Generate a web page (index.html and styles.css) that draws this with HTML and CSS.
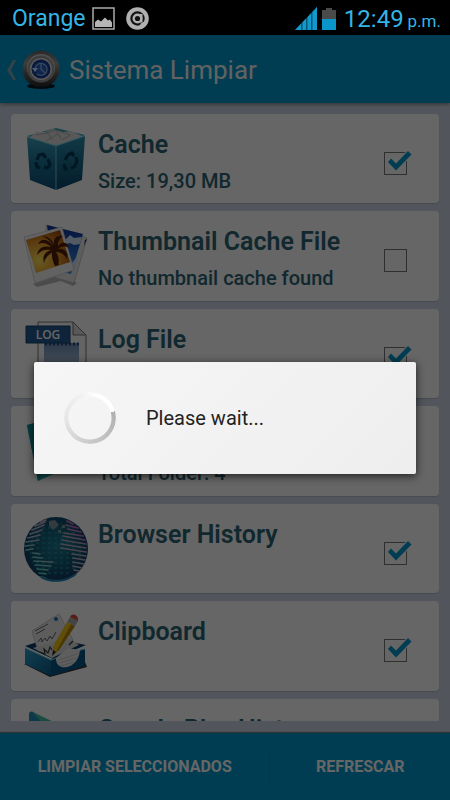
FILE: index.html
```html
<!DOCTYPE html>
<html lang="es">
<head>
<meta charset="utf-8">
<meta name="viewport" content="width=device-width, initial-scale=1">
<title>Sistema Limpiar</title>
<link rel="stylesheet" href="styles.css">
</head>
<body>
<div class="status">
  <span class="carrier">Orange</span>
  <svg class="status-icon" width="23" height="23" viewBox="0 0 23 23" aria-hidden="true"><rect x="1" y="1" width="21" height="21" fill="none" stroke="#aaa" stroke-width="1.5"/><path d="M3 20v-5l3-2.500 3 2 4-4 3 3 2-1 2 3v4.500z" fill="#b5b5b5"/></svg>
  <svg class="status-icon" width="23" height="23" viewBox="0 0 23 23" aria-hidden="true"><circle cx="11.500" cy="11.500" r="11.300" fill="#b0b0b0"/><circle cx="11.500" cy="11.500" r="7.200" fill="#111"/><circle cx="11.500" cy="11.500" r="5" fill="#b0b0b0"/><circle cx="11.500" cy="11.500" r="2.600" fill="#111"/><path d="M14 7h2.500v8.500H14z" fill="#b0b0b0"/><path d="m14 17 5-3 1 3-4 3z" fill="#b0b0b0"/></svg>
  <svg class="signal" width="23" height="23" viewBox="0 0 23 23" aria-hidden="true"><path d="M0 23 22 0v23z" fill="#08557a"/><path d="M0 23 6 16.700V23zM7.500 15.200 11 11.500V23H7.500zM12.500 10 16 6.300V23h-3.500zM17.500 4.700 22 0v23h-4.500z" fill="#1199cc"/></svg>
  <svg width="14" height="22" viewBox="0 0 14 22" aria-hidden="true"><path d="M0 2h4V0h6v2h4v20H0z" fill="#4a4a4a"/><path d="M0 11h14v11H0z" fill="#0a96c8"/></svg>
  <span class="clock">12:49 <small>p.m.</small></span>
</div>
<div class="app">
  <header class="header">
    <a class="back" href="#" aria-label="Atrás"><svg width="10" height="22" viewBox="0 0 10 22"><path d="M7 1h3L5 11l5 10H7L1 11z" fill="#7fa5b5"/></svg></a>
    <svg class="logo" width="38" height="40" viewBox="0 0 38 40" aria-hidden="true">
      <defs>
        <linearGradient id="metal" x1="0" y1="0" x2="0" y2="1"><stop offset="0" stop-color="#666"/><stop offset=".35" stop-color="#999"/><stop offset=".6" stop-color="#666"/><stop offset="1" stop-color="#222"/></linearGradient>
        <radialGradient id="dial"><stop offset="0" stop-color="#2f76e0"/><stop offset="1" stop-color="#12368d"/></radialGradient>
      </defs>
      <ellipse cx="19" cy="36" rx="14" ry="3" fill="#001c28"/>
      <circle cx="19" cy="19" r="18.500" fill="url(#metal)"/>
      <circle cx="19" cy="18" r="14" fill="#ccc"/><circle cx="19" cy="19" r="13.500" fill="#999"/>
      <circle cx="19" cy="19" r="11" fill="#ddd"/><circle cx="19" cy="19" r="9.500" fill="url(#dial)"/>
      <path d="M13 19a6 6 0 1 1 2 4.800M19 14v5l4 4" fill="none" stroke="#8fb0e5" stroke-width="1.300"/><path d="M10 18h6l-3 4z" fill="#cfe0fa"/>
    </svg>
    <h1>Sistema Limpiar</h1>
  </header>
  <main class="list">
    <div class="cards">
      <label class="card">
        <svg class="icon" viewBox="0 0 66 66" aria-hidden="true">
          <defs>
            <linearGradient id="binL" x1="0" y1="0" x2="0" y2="1"><stop offset="0" stop-color="#3da2bd"/><stop offset=".5" stop-color="#1a7096"/><stop offset="1" stop-color="#0e4f78"/></linearGradient>
            <linearGradient id="binR" x1="0" y1="0" x2="0" y2="1"><stop offset="0" stop-color="#2c8fae"/><stop offset="1" stop-color="#0a456b"/></linearGradient>
          </defs>
          <path d="M4 10 33 2l29 7-29 10z" fill="#36a4c2"/>
          <path d="m7 11 6-5 9 0 8-3 10 3 8-1 11 5-13 6-13 3-16-4z" fill="#ddd"/>
          <path d="m13 9 12-2 4 7m-6-7 10-3 5 9m-5-9 14 5-8 5m-16 1 12-7" fill="none" stroke="#aaa" stroke-width=".8"/>
          <path d="M4 11 33 20v44L7 54z" fill="url(#binL)"/><path d="M33 20 62 10l-3 44-26 10z" fill="url(#binR)"/>
          <path d="m4 11 29 9 29-10M33 20v44" fill="none" stroke="#69cbe0" stroke-width="1"/>
          <g fill="none" stroke="#073a5b" stroke-width="3.200" stroke-linejoin="round"><path d="m14 34 2-5 4-1 3 4M25 33l2 6-3 3-3-1M17 42l-3-1-1-5"/><path d="m42 34 3-5 4-2 2 3M53 31l1 5-3 5-3 1M45 43l-3 0-1-5"/></g>
        </svg>
        <span class="text"><strong>Cache</strong><span class="sub">Size: 19,30 MB</span></span>
        <span class="check"><input type="checkbox" checked><svg viewBox="0 0 30 26"><path d="m4 12 3-3.500 5 5L24 1l3.500 3.500L12 20.500z"/></svg></span>
      </label>
      <label class="card">
        <svg class="icon" viewBox="0 0 66 66" aria-hidden="true">
          <defs>
            <radialGradient id="sun" cx=".3" cy=".7" r=".9"><stop offset="0" stop-color="#ffe45c"/><stop offset=".45" stop-color="#e99a2a"/><stop offset="1" stop-color="#903b08"/></radialGradient>
            <linearGradient id="sky" x1="0" y1="0" x2="0" y2="1"><stop offset="0" stop-color="#0d2f96"/><stop offset="1" stop-color="#3795e6"/></linearGradient>
          </defs>
          <path d="m10 61 30-10 14 9-4 3-12-5-24 6z" fill="#bbb"/>
          <path d="m23 2 41 13-13 45-28-8z" fill="#e8e8e8" stroke="#aaa" stroke-width=".6"/>
          <path d="m24 2 36 9-12 40-18-4z" fill="url(#sky)"/>
          <path d="m62 17 2-1-3 7z" fill="#222"/>
          <path d="m42 17 5-5 4 3 8-1-2 7-6 1-4-2-6 2zM47 42l8-9-3 13z" fill="#cde3fa"/>
          <path d="m1 14 38-10 12 43-39 13z" fill="#f4f4f4" stroke="#bbb" stroke-width=".6"/>
          <path d="m3 17 34-10 10 32-34 11z" fill="url(#sun)"/>
          <path d="M30 25c-2 7-1 11 2 18l4-1c-4-7-4-12-3-18z" fill="#421804"/>
          <path d="M30 23c-5-8-12-8-15-2 5-2 9-1 13 3-8-2-13 1-14 8 4-5 8-6 14-5-6 2-9 6-7 13 1-5 5-9 9-11 0 5 1 9 5 13 2-5 0-10-2-13 5 0 9 3 11 7 2-7-3-11-9-10 4-3 7-3 11-1-1-6-7-7-11-2 0-5 2-8 5-10-7-1-10 3-9 9-1-5-6-9-12-9 5 2 9 5 11 10z" fill="#53200a"/>
        </svg>
        <span class="text"><strong>Thumbnail Cache File</strong><span class="sub">No thumbnail cache found</span></span>
        <span class="check"><input type="checkbox"></span>
      </label>
      <label class="card">
        <svg class="icon" viewBox="0 0 66 66" aria-hidden="true">
          <defs><linearGradient id="note" x1="0" y1="0" x2="0" y2="1"><stop offset="0" stop-color="#6f8eb5"/><stop offset="1" stop-color="#dce8f6"/></linearGradient></defs>
          <path d="M15 1h35l13 13v51H15z" fill="#fafafa" stroke="#777"/>
          <path d="M50 1v13h13z" fill="#ddd" stroke="#777"/>
          <path d="M21 22h35v38H21z" fill="url(#note)"/>
          <path d="M22 23h34" stroke="#274d82" stroke-width="3" stroke-dasharray="2 2"/>
          <path d="M3 5h44v17H3z" fill="#235a92" stroke="#184470"/>
          <text x="25" y="18" class="log-text">LOG</text>
        </svg>
        <span class="text"><strong>Log File</strong></span>
        <span class="check"><input type="checkbox" checked><svg viewBox="0 0 30 26"><path d="m4 12 3-3.500 5 5L24 1l3.500 3.500L12 20.500z"/></svg></span>
      </label>
      <label class="card">
        <svg class="icon" viewBox="0 0 66 66" aria-hidden="true"><path d="M4 7 46 1v48L15 63z" fill="#22b3b8"/><path d="m4 7 7-2 7 55-3 3z" fill="#0d9499"/></svg>
        <span class="text"><span class="sub">Total Folder: 4</span></span>
        <span class="check"><input type="checkbox" checked></span>
      </label>
      <label class="card">
        <svg class="icon" viewBox="0 0 66 66" aria-hidden="true">
          <defs>
            <radialGradient id="globe" cx=".5" cy=".45"><stop offset="0" stop-color="#1c7c90"/><stop offset=".7" stop-color="#0e5570"/><stop offset="1" stop-color="#123f63"/></radialGradient>
            <linearGradient id="land" gradientUnits="userSpaceOnUse" x1="10" y1="60" x2="60" y2="8"><stop offset="0" stop-color="#2fe0c0"/><stop offset=".35" stop-color="#a9b9c5"/><stop offset=".75" stop-color="#b9a6bf"/><stop offset="1" stop-color="#d23fc0"/></linearGradient>
            <pattern id="dots" width="6" height="5" patternUnits="userSpaceOnUse"><path d="M1 2h3" stroke="#2b90aa" stroke-width="1"/></pattern>
          </defs>
          <circle cx="33" cy="33" r="32" fill="url(#globe)"/><circle cx="33" cy="34" r="27" fill="url(#dots)"/>
          <g fill="none" stroke="url(#land)" stroke-width="1.700" stroke-linecap="round">
            <path d="m17 6 6-2m-11 6 10-4M9 14l12-5M7 18l12-4M5 22l12-3M3 26l13-2M2 30l9-1M3 34l7-1"/>
            <path d="m10 37 7 1m-7 3 9 1m-8 3 19 1m-18 3 16 1m-14 3 11 1m-9 3 7 1m-5 3 4 1"/>
            <path d="m44 5 6 3m-7 1 12 3m-10 1 13 3m-17 1 19 3m-20 0 22 4m-23 0 24 4m-25 0 25 4m-25 0 25 4m-14 2 14 2m-13 2 12 2m-12 2 11 2m-11 2 9 2m-8 2 5 1"/>
          </g>
          <path d="m26 5 6-1 4 5-6 5-4-4zM39 9h3v3h-3zM35 14h3v3h-3z" fill="#7f939e"/>
          <path d="M18 61a32 32 0 0 0 35-3" fill="none" stroke="#1f86b8" stroke-width="2"/>
        </svg>
        <span class="text"><strong>Browser History</strong></span>
        <span class="check"><input type="checkbox" checked><svg viewBox="0 0 30 26"><path d="m4 12 3-3.500 5 5L24 1l3.500 3.500L12 20.500z"/></svg></span>
      </label>
      <label class="card">
        <svg class="icon" viewBox="0 0 66 66" aria-hidden="true">
          <defs><linearGradient id="tray" x1="0" y1="0" x2="1" y2="1"><stop offset="0" stop-color="#2c9fc6"/><stop offset="1" stop-color="#0b5c8c"/></linearGradient></defs>
          <path d="m1 51 26 13 37-10-2-5z" fill="#333"/>
          <path d="m2 33 25-8 36 7-33 14z" fill="#0b3d66"/>
          <path d="m9 18 27-17 14 26-28 14-8-6z" fill="#e9e9e9" stroke="#aaa" stroke-width=".6"/>
          <path d="m12 18 13-7m-12 10 9-5M15 29l3-4 1 4 3-4 2 3 3-5 2 3 4-7" fill="none" stroke="#666" stroke-width="1"/><circle cx="33" cy="6" r="2" fill="#1d6ec0"/>
          <path d="m10 35 35-10 11 7-27 13z" fill="#ddd"/>
          <path d="m17 39 5 2-1-5 4 4 2-6 2 3m17-5 4-4" fill="none" stroke="#333" stroke-width="1.200"/>
          <path d="M2 35v16l26 12V47z" fill="url(#tray)"/><path d="M28 47v16l34-10V36z" fill="#0b5684"/>
          <path d="M33 45c-1 14 22 13 24-8l-12-2z" fill="#ececec"/><path d="m36 47 18-6M36 50l17-5M38 53l13-4" stroke="#bbb" stroke-width=".7"/>
          <path d="m2 35 26 12 5-2m24-8 5-1" fill="none" stroke="#70c7e4"/>
          <path d="m44 9 8 4-16 24-6 5 0-9z" fill="#f0c51c"/><path d="m48 11 4 2-16 24-3 2z" fill="#b98809"/>
          <path d="m44 9 3-5 8 4-3 5z" fill="#aaa"/><path d="m47 4c2-5 9-2 8 4z" fill="#d44d40"/><path d="m30 37 3 2-4 4z" fill="#222"/>
        </svg>
        <span class="text"><strong>Clipboard</strong></span>
        <span class="check"><input type="checkbox" checked><svg viewBox="0 0 30 26"><path d="m4 12 3-3.500 5 5L24 1l3.500 3.500L12 20.500z"/></svg></span>
      </label>
      <label class="card">
        <svg class="icon" viewBox="0 0 66 66" aria-hidden="true"><path d="M6 3c0-2 2-3 4-2l26 14-30 28z" fill="#2590b8"/><path d="M8 1 60 28 36 15z" fill="#50c7a0"/><path d="M9 1l22 10 8 6-8 7z" fill="#46bd9d"/></svg>
        <span class="text"><strong>Google Play History</strong></span>
        <span class="check"><input type="checkbox"></span>
      </label>
    </div>
  </main>
  <footer class="actions">
    <button class="clean" type="button">LIMPIAR SELECCIONADOS</button>
    <button class="refresh" type="button">REFRESCAR</button>
  </footer>
  <div class="overlay">
    <div class="dialog" role="alertdialog" aria-labelledby="message">
      <span class="spinner"></span>
      <p id="message">Please wait...</p>
    </div>
  </div>
</div>
</body>
</html>
```
FILE: styles.css
```css
* { box-sizing: border-box; }
body {
  margin: 0;
  height: 100vh;
  display: flex;
  flex-direction: column;
  background: #000;
  font-family: Roboto, "Liberation Sans", sans-serif;
}
.status {
  display: flex;
  align-items: center;
  height: 35px;
  padding: 2px 9px 0 12px;
  color: #33b5e5;
  font-size: 23px;
}
.status-icon { margin-left: 6px; }
.status-icon + .status-icon { margin-left: 11px; }
.signal { margin: 0 4px 0 auto; }
.clock { margin-left: 8px; padding-top: 2px; font-size: 24px; line-height: 32px; }
.clock small { font-size: 17px; margin-left: -2px; }
.app {
  position: relative;
  flex: 1;
  min-height: 0;
  display: flex;
  flex-direction: column;
  background: #ced5e3;
}
.header {
  display: flex;
  align-items: center;
  height: 68px;
  padding: 2px 6px 0;
  background: #0099cc;
  box-shadow: 0 2px 3px rgba(0, 0, 0, .3);
}
.back { display: flex; width: 16px; }
.logo { flex: none; }
h1 {
  margin: 0 0 0 9px;
  color: #f4f4f4;
  font-size: 26px;
  font-weight: 400;
}
.list {
  flex: 1;
  min-height: 0;
  overflow: hidden;
  padding: 11px 11px 0;
  margin-bottom: 12px;
}
.cards {
  display: grid;
  grid-template-rows: repeat(7, minmax(0, 1fr));
  gap: 8px;
  height: 674px;
}
.card {
  display: flex;
  align-items: flex-start;
  padding: 12px 12px 4px;
  background: #fff;
  border-radius: 4px;
  box-shadow: 0 1px 1px rgba(0, 0, 0, .15);
}
.icon { flex: none; width: 66px; height: 66px; }
.log-text {
  fill: #fff;
  font-family: "Open Sans", sans-serif;
  font-size: 12px;
  font-weight: 600;
  text-anchor: middle;
}
.text {
  flex: 1;
  display: grid;
  grid-template-rows: 38px 32px;
  margin-left: 9px;
  color: #2b6474;
  white-space: nowrap;
}
strong { font-size: 25px; line-height: 38px; font-weight: 600; }
.sub { grid-row: 2; font-size: 20px; line-height: 34px; font-weight: 500; }
.check {
  position: relative;
  width: 23px;
  height: 23px;
  margin: 26px 20px 0 0;
}
.check input {
  appearance: none;
  display: block;
  width: 23px;
  height: 23px;
  margin: 0;
  border: 1px solid #777;
}
.check svg {
  position: absolute;
  left: 0;
  top: -2px;
  width: 30px;
  height: 26px;
}
.check path { fill: #0099cc; stroke: #fff; stroke-width: 2px; paint-order: stroke; }
.actions {
  display: flex;
  align-items: center;
  height: 67px;
  background: #0099cc;
  box-shadow: 0 -1px 1px rgba(0, 0, 0, .4);
}
.actions button {
  height: 36px;
  padding: 0;
  border: 0;
  background: none;
  color: #fff;
  font: 700 16px Roboto, sans-serif;
}
.actions .clean { flex: 3; border-right: 1px solid #1688b4; }
.actions .refresh { flex: 2; }
.overlay {
  position: absolute;
  inset: 0;
  display: flex;
  align-items: center;
  justify-content: center;
  padding: 0 34px;
  background: rgba(0, 0, 0, .6);
}
.dialog {
  display: flex;
  align-items: center;
  gap: 30px;
  width: 100%;
  padding: 30px;
  background: linear-gradient(135deg, #f6f6f6, #eee);
  border-radius: 2px;
  box-shadow: 0 2px 8px rgba(0, 0, 0, .7);
}
.spinner {
  width: 52px;
  height: 52px;
  border-radius: 50%;
  background: conic-gradient(from 75deg, #b0b0b0, #c8c8c8 100deg, #e6e6e6 190deg, #f0f0f0 260deg, #fff 300deg, #fff);
  mask: radial-gradient(circle, transparent 21px, #000 22px);
}
.dialog p { margin: 0; color: #222; font-size: 20px; font-weight: 400; }
```
